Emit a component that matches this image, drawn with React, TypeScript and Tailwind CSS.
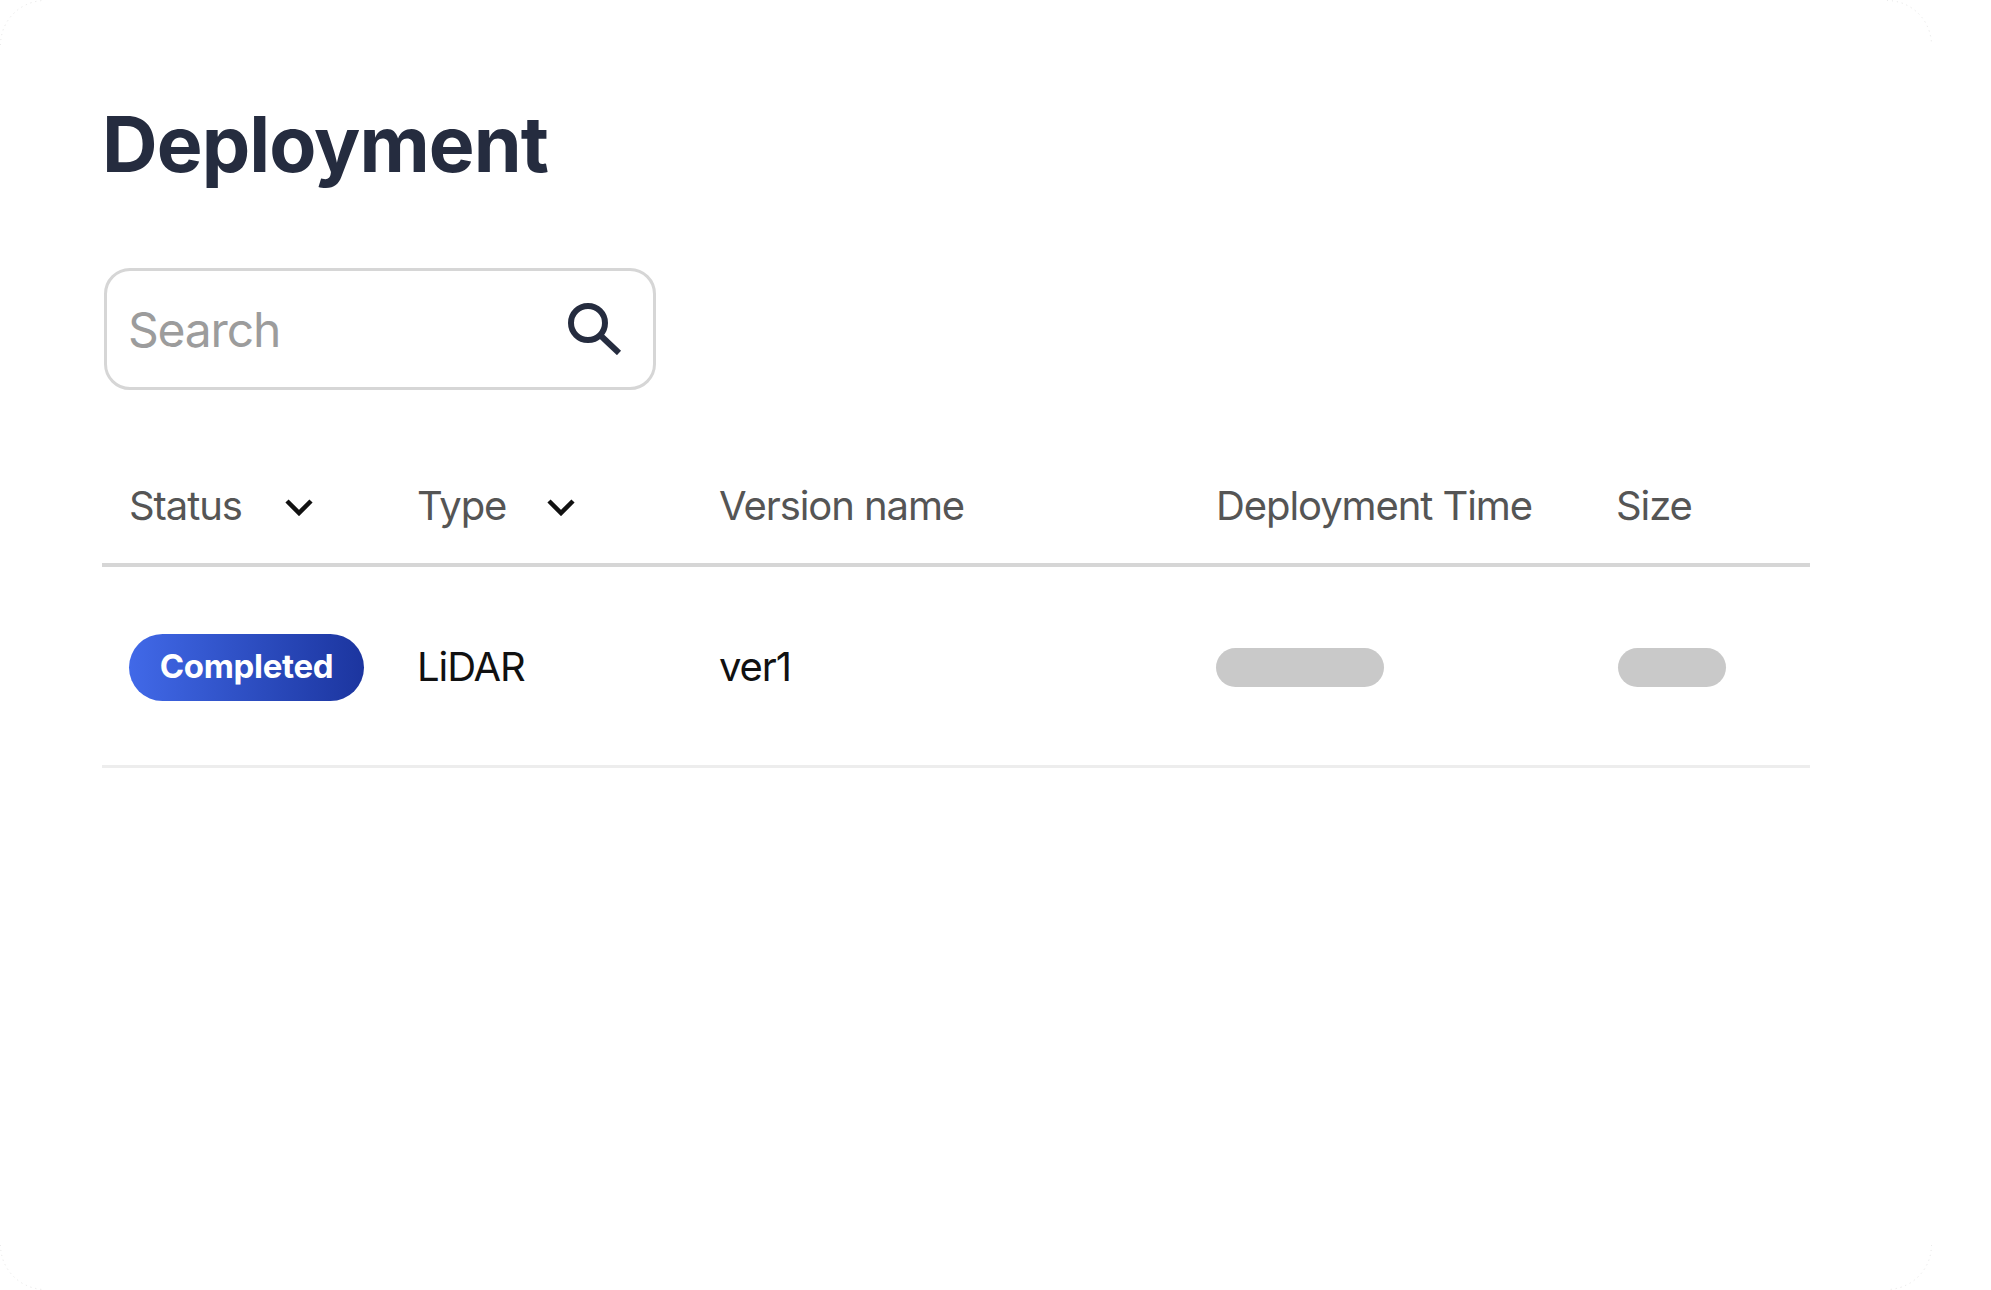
const columns = 'grid grid-cols-[288px_302px_497px_400px_1fr] pl-[27px] items-center';

function Chevron() {
  return (
    <svg width="28" height="18" viewBox="0 0 28 18" fill="none" className="shrink-0 mt-[2px]">
      <path d="M2 3 14 15 26 3" stroke="#111" strokeWidth="4.5" />
    </svg>
  );
}

function SearchIcon() {
  return (
    <svg width="54" height="52" viewBox="0 0 54 52" fill="none" className="shrink-0">
      <circle cx="20" cy="20" r="17" stroke="#252c3f" strokeWidth="6" />
      <path d="M32 32 51 50" stroke="#252c3f" strokeWidth="6" />
    </svg>
  );
}

// faint marks left on the card's rounded corners
function Corner({ className, d }: { className: string; d: string }) {
  return (
    <svg width="45" height="45" viewBox="0 0 45 45" fill="none" className={`absolute ${className}`}>
      <path d={d} stroke="#e4e4e4" strokeWidth="1" strokeDasharray="1 4" />
    </svg>
  );
}

export default function App() {
  return (
    <div className="relative w-[1991px] h-[1290px] bg-white overflow-hidden font-['Inter',sans-serif]">
      <Corner className="left-0 top-0" d="M0.5 45A44.5 44.5 0 0 1 45 0.5" />
      <Corner className="left-[1887px] top-0" d="M0 0.5A44.5 44.5 0 0 1 44.5 45" />
      <Corner className="left-0 top-[1245px]" d="M0.5 0A44.5 44.5 0 0 0 45 44.5" />
      <Corner className="left-[1887px] top-[1245px]" d="M44.5 0A44.5 44.5 0 0 1 0 44.5" />

      <div className="w-[1932px] h-[1290px] pl-[102px] pt-[98px]">
        <h1 className="text-[77px] leading-[92px] font-bold tracking-[-0.012em] text-[#252c3f]">Deployment</h1>

        <div className="mt-[78px] ml-[2px] w-[552px] h-[122px] flex items-center pl-[21px] pr-[31px] rounded-[26px] border-[3px] border-[#d6d6d6]">
          <input
            placeholder="Search"
            className="flex-1 min-w-0 pt-[2px] text-[48px] tracking-[-0.025em] text-[#111] placeholder:text-[#9c9c9c] outline-none bg-transparent"
          />
          <SearchIcon />
        </div>

        <div className="mt-[60px] w-[1708px]">
          <div className={`${columns} h-[117px] pb-[2px] border-b-[4px] border-[#d6d6d6] text-[40px] tracking-[-0.027em] text-[#555]`}>
            <div className="flex items-center">
              <span className="w-[156px]">Status</span>
              <Chevron />
            </div>
            <div className="flex items-center">
              <span className="w-[130px]">Type</span>
              <Chevron />
            </div>
            <span>Version name</span>
            <span>Deployment Time</span>
            <span>Size</span>
          </div>

          <div className={`${columns} h-[201px] pt-[3px] border-b-[3px] border-[#ededed] text-[40px] tracking-[-0.027em] text-[#111]`}>
            <div>
              <span className="flex items-center justify-center w-[235px] h-[67px] pb-[2px] rounded-full bg-linear-to-r from-[#4169e8] to-[#1c359f] text-[33px] font-bold tracking-[-0.01em] text-white">
                Completed
              </span>
            </div>
            <span className="pb-[2px]">LiDAR</span>
            <span className="pb-[2px]">ver1</span>
            <div className="w-[168px] h-[39px] rounded-full bg-[#c9c9c9]" />
            <div className="w-[108px] h-[39px] ml-[2px] rounded-full bg-[#c9c9c9]" />
          </div>
        </div>
      </div>
    </div>
  );
}
